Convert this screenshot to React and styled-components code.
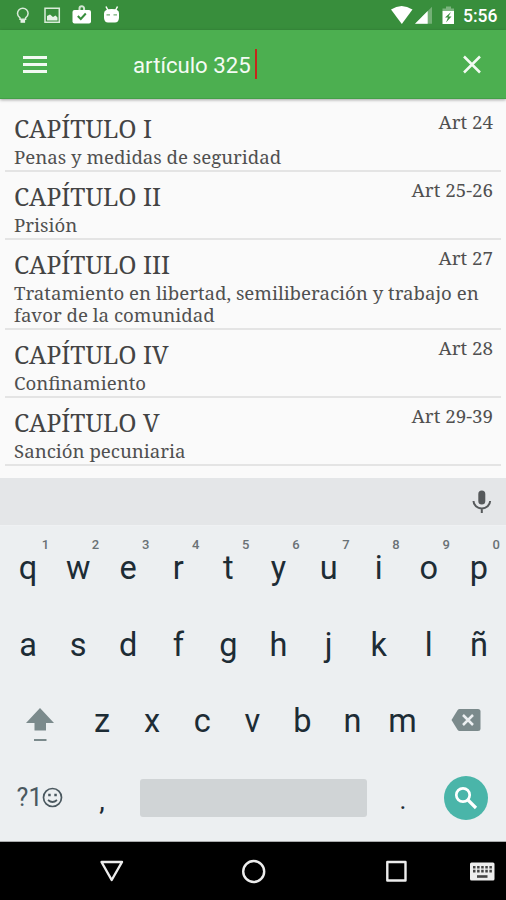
import React from "react";
import styled, { createGlobalStyle } from "styled-components";

const Global = createGlobalStyle`
  * { box-sizing: border-box; }
  body { margin: 0; background: #fafafa; font-family: Roboto, sans-serif; }
  svg { display: block; flex: none; }
`;

const Screen = styled.div`
  width: 506px;
  height: 900px;
  display: flex;
  flex-direction: column;
  overflow: hidden;
  background: #fafafa;
`;

const StatusBar = styled.div`
  height: 30px;
  flex: none;
  display: flex;
  justify-content: space-between;
  background: #388e3c;
  color: #fff;
`;

const Toolbar = styled.header`
  height: 69px;
  flex: none;
  display: flex;
  align-items: center;
  padding: 2px 24px 0 23px;
  background: #4caf50;
  border-bottom: 1px solid #43a047;
  box-shadow: 0 1px 3px rgba(0, 0, 0, 0.35);
  z-index: 1;
`;

const Query = styled.div`
  flex: 1;
  display: flex;
  align-items: center;
  margin-left: 86px;
  color: #f4fbf4;
  font-size: 22.2px;
  line-height: 30px;
`;

const Caret = styled.span`
  width: 2px;
  height: 30px;
  margin: -2px 0 0 4.5px;
  background: #c5261b;
`;

const List = styled.main`
  flex: 1;
  padding: 5px 5px 0;
  font-family: "Noto Serif", "Droid Serif", "DejaVu Serif Condensed", "DejaVu Serif", serif;
  color: #505050;
`;

const Item = styled.article`
  display: grid;
  grid-template-columns: 1fr auto;
  padding: 7px 8px 2px 9px;
  border-bottom: 2px solid #e4e4e4;
`;

const Title = styled.h2`
  margin: 0;
  font-size: 24.6px;
  font-weight: 400;
  line-height: 35px;
  color: #444;
`;

const Articles = styled.span`
  font-size: 18.8px;
  line-height: 22px;
`;

const Summary = styled.p`
  grid-column: 1 / -1;
  margin: 0;
  font-size: 18.65px;
  line-height: 22px;
`;

const Suggestions = styled.div`
  height: 48px;
  flex: none;
  display: flex;
  align-items: center;
  justify-content: flex-end;
  padding-right: 13px;
  background: #e4e6e8;
  border-bottom: 1px solid #eff1f3;
`;

const Keyboard = styled.div`
  height: 316px;
  flex: none;
  padding-top: 4px;
  background: #eceff1;
  border-bottom: 1px solid #a9abac;
`;

const KeyRow = styled.div`
  height: ${(p) => p.$height || 76.5}px;
  display: grid;
  grid-template-columns: ${(p) => p.$columns};
  padding-left: 3px;
  align-items: center;
`;

const Key = styled.div`
  position: relative;
  height: 76px;
  display: flex;
  align-items: center;
  justify-content: center;
  padding: ${(p) => p.$drop || 0}px 0 ${(p) => p.$lift || 0}px;
  font-size: ${(p) => p.$size || 32.5}px;
  color: ${(p) => p.$color || "#1d2c35"};
`;

const Hint = styled.sup`
  position: absolute;
  top: 7px;
  right: 4px;
  font-size: 13px;
  font-weight: 500;
  line-height: 15px;
  color: #697175;
`;

const SpaceBar = styled.div`
  height: 38px;
  border-radius: 3px;
  background: #d0d4d6;
`;

const SearchKey = styled.div`
  width: 44px;
  height: 44px;
  display: flex;
  align-items: center;
  justify-content: center;
  justify-self: center;
  border-radius: 50%;
  background: #4ab5a9;
`;

const NavBar = styled.nav`
  height: 58px;
  flex: none;
  background: #000;
`;

const chapters = [
  ["CAPÍTULO I", "Art 24", "Penas y medidas de seguridad"],
  ["CAPÍTULO II", "Art 25-26", "Prisión"],
  ["CAPÍTULO III", "Art 27", "Tratamiento en libertad, semiliberación y trabajo en favor de la comunidad"],
  ["CAPÍTULO IV", "Art 28", "Confinamiento"],
  ["CAPÍTULO V", "Art 29-39", "Sanción pecuniaria"],
];

const StatusLeft = () => (
  <svg width="130" height="30" fill="none">
    <path d="M20 19.3v-1.5c-1.4-1-2.5-2.500-2.500-4.300a5.300 5.300 0 0 1 10.600 0c0 1.800-1.100 3.300-2.500 4.300v1.500z" stroke="#d9ecd9" strokeWidth="1.500" />
    <path d="M20.500 20h4.600v2.800h-4.600z" fill="#e6f2e6" />
    <path d="M45 8.200h14.300v14H45z" stroke="#d9ecd9" strokeWidth="1.500" />
    <path d="M47 20.500v-4.500l3-1.500 3 2.500 2.500-1.500 2 2v3z" fill="#e6f2e6" />
    <path d="M79.500 10V8.500a2.300 2.300 0 0 1 4.600 0V10" stroke="#d2e6d2" strokeWidth="2" />
    <rect x="72.500" y="10" width="18.500" height="13.500" rx="2" fill="#fff" />
    <path d="m77.800 16 3 3 5-5.500" stroke="#388e3c" strokeWidth="2" />
    <path d="m106 6.500 2 4M117.500 6.500l-2 4" stroke="#fff" strokeWidth="1.500" />
    <path d="M104 13.500q0-4.500 7.700-4.500t7.300 4.500v4.500q-.500 4.500-4 4.500h-7q-3.500 0-4-4.500z" fill="#fff" />
    <path d="M106.500 14.800h3.500m3.500 0h3.500" stroke="#73ad76" strokeWidth="1.300" />
  </svg>
);

const StatusRight = () => (
  <svg width="120" height="30" fill="#fff">
    <path d="M5 9.500Q15.500 2.500 26.500 9.500L15.800 24z" />
    <path d="m29 23.800 17-17v17z" fillOpacity=".3" />
    <path d="m29 23.800 12.700-12.700v12.700z" />
    <path d="M56.500 11V8.500H60V6.500h5v2h3V11z" fillOpacity=".35" />
    <path d="M56.500 11H68v13H56.500z" />
    <path d="m65 12-6 5.500h3l-2 5 5.500-6h-3z" fill="#388e3c" />
    <text x="77" y="22" fontFamily="Roboto" fontSize="17.500" fontWeight="500">5:56</text>
  </svg>
);

const MicIcon = () => (
  <svg width="22" height="26" fill="none" stroke="#56595b">
    <rect x="7.300" y="1.500" width="7" height="14" rx="3.500" fill="#56595b" stroke="none" />
    <path d="M2.500 12a8.300 7.500 0 0 0 16.600 0M10.800 19.500V24" strokeWidth="2" />
  </svg>
);

const ShiftIcon = () => (
  <svg width="30" height="36" fill="#7b8a8c">
    <path d="M15 1 29 16H21v7.500H9.500V16H1z" />
    <path d="M9 32h12.500v2H9z" />
  </svg>
);

const DeleteIcon = () => (
  <svg width="30" height="24">
    <path d="M8.500 1H27q2.500 0 2.500 2.500V21q0 2-2.500 2H8.500q-1 0-2-1.200L.5 12 6.500 2.200Q7.500 1 8.500 1z" fill="#7b8a8c" />
    <path d="m12 7 10 10m0-10L12 17" stroke="#eceff1" strokeWidth="2.500" />
  </svg>
);

const SmileIcon = () => (
  <svg width="21" height="22" fill="none" stroke="#4a585f" strokeWidth="1.700">
    <circle cx="10.500" cy="10.500" r="9" />
    <path d="M6 13q4.500 4 9 0" />
    <path d="M6.200 8h2.500m3.600 0h2.500" strokeWidth="2.400" />
  </svg>
);

const NavIcons = () => (
  <svg width="506" height="58" fill="none" stroke="#ededed" strokeWidth="2.400" strokeLinejoin="round">
    <path d="M101.500 20h20.500L111.700 38z" />
    <circle cx="253.700" cy="29.500" r="10.500" />
    <path d="M387.300 20h18.200v18.500h-18.200z" />
    <rect x="470" y="20.500" width="24.500" height="18" rx="1.500" fill="#ededed" stroke="none" />
    <path d="M473 25.300h19M473 29.100h19" stroke="#444" strokeWidth="2.600" strokeDasharray="2.500 1.600" />
    <path d="M477 34.500h10.500" stroke="#444" strokeWidth="2.600" />
  </svg>
);

export default function App() {
  return (
    <>
      <Global />
      <Screen>
        <StatusBar>
          <StatusLeft />
          <StatusRight />
        </StatusBar>
        <Toolbar>
          <svg width="24" height="20" stroke="#f2faf2" strokeWidth="2.800">
            <path d="M0 2.500h24M0 9.500h24M0 16.500h24" />
          </svg>
          <Query>
            artículo 325
            <Caret />
          </Query>
          <svg width="20" height="20" stroke="#f2faf2" strokeWidth="2.500">
            <path d="m2 1.500 16 16M18 1.500l-16 16" />
          </svg>
        </Toolbar>
        <List>
          {chapters.map(([title, articles, summary]) => (
            <Item key={title}>
              <Title>{title}</Title>
              <Articles>{articles}</Articles>
              <Summary>{summary}</Summary>
            </Item>
          ))}
        </List>
        <Suggestions>
          <MicIcon />
        </Suggestions>
        <Keyboard>
          <KeyRow $columns="repeat(10, 50.1px)">
            {[..."qwertyuiop"].map((k, i) => (
              <Key key={k}>
                {k}
                <Hint>{(i + 1) % 10}</Hint>
              </Key>
            ))}
          </KeyRow>
          <KeyRow $columns="repeat(10, 50.1px)">
            {[..."asdfghjklñ"].map((k) => (
              <Key key={k}>{k}</Key>
            ))}
          </KeyRow>
          <KeyRow $columns="74px repeat(7, 50.1px) 77px">
            <Key $drop={7}><ShiftIcon /></Key>
            {[..."zxcvbnm"].map((k) => (
              <Key key={k}>{k}</Key>
            ))}
            <Key $lift={3}><DeleteIcon /></Key>
          </KeyRow>
          <KeyRow $height={74} $columns="74px 50px 13px 227px 11px 50px 75px">
            <Key $size={25} $color="#4a585f">?1<SmileIcon /></Key>
            <Key $size={28} $drop={6}>,</Key>
            <span />
            <SpaceBar />
            <span />
            <Key $size={26} $drop={4}>.</Key>
            <SearchKey>
              <svg width="24" height="24" fill="none" stroke="#fff" strokeWidth="2.700">
                <circle cx="9" cy="9" r="6.700" />
                <path d="m14 14 8 8" strokeWidth="3.200" />
              </svg>
            </SearchKey>
          </KeyRow>
        </Keyboard>
        <NavBar>
          <NavIcons />
        </NavBar>
      </Screen>
    </>
  );
}
